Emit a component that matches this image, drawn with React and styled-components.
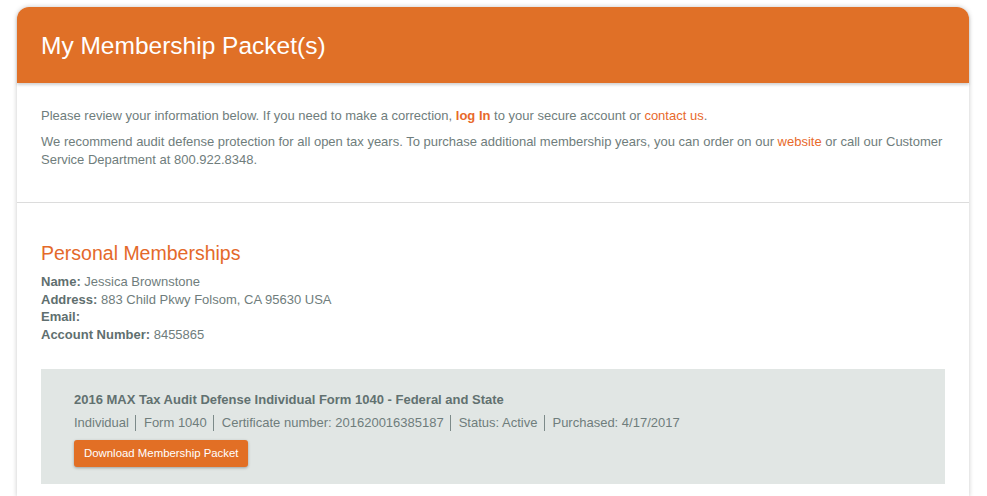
import React from "react";
import styled, { createGlobalStyle } from "styled-components";

const Global = createGlobalStyle`
  html, body { margin: 0; padding: 0; background: #ffffff; }
  body { font-family: "Liberation Sans", Arial, sans-serif; color: #6f7d7c; }
  * { box-sizing: border-box; }
`;

const Page = styled.div`
  padding: 7px 18px 0 17px;
`;

const Card = styled.div`
  background: #fff;
  border-radius: 12px 12px 0 0;
  box-shadow: 0 0 5px rgba(0, 0, 0, 0.22);
`;

const Header = styled.header`
  height: 76px;
  background: #e07027;
  border-radius: 12px 12px 0 0;
  display: flex;
  align-items: center;
  padding: 0 24px;
  box-shadow: 0 2px 3px rgba(0, 0, 0, 0.18);
  position: relative;
`;

const Title = styled.h1`
  margin: 0;
  font-size: 24.5px;
  font-weight: 400;
  color: #fff;
  padding-top: 2px;
`;

const Section = styled.section`
  padding: ${(p) => p.$pad};
  border-bottom: ${(p) => (p.$divider ? "1px solid #dcdcdc" : "none")};
`;

const Para = styled.p`
  margin: 0 0 8px;
  font-size: 13px;
  line-height: 18px;
`;

const Link = styled.a`
  color: #e8692b;
  text-decoration: none;
  font-weight: ${(p) => (p.$bold ? 700 : 400)};
`;

const Heading = styled.h2`
  margin: 0 0 8px;
  font-size: 19.5px;
  line-height: 24px;
  font-weight: 400;
  color: #e4692a;
`;

const InfoList = styled.div`
  display: flex;
  flex-direction: column;
  font-size: 13px;
  line-height: 17.7px;
`;

const Label = styled.b`
  color: #5f6f6f;
  font-weight: 700;
`;

const Packet = styled.div`
  margin-top: 25px;
  background: #e1e6e4;
  padding: 22px 33px 17px;
`;

const PacketTitle = styled.div`
  font-size: 13px;
  font-weight: 700;
  line-height: 18px;
  color: #617170;
`;

const Meta = styled.div`
  display: flex;
  font-size: 13px;
  line-height: 18px;
  margin-top: 5px;
`;

const MetaItem = styled.span`
  padding-right: 6.5px;
  padding-left: ${(p) => (p.$first ? "0" : "7.5px")};
  border-left: ${(p) => (p.$first ? "none" : "1px solid #7c8a89")};
  line-height: 16px;
  margin-top: 1px;
`;

const Button = styled.button`
  margin-top: 9px;
  height: 27px;
  padding: 0 10px;
  background: #e26f25;
  color: #fff;
  border: none;
  border-radius: 3px;
  font-family: "Liberation Sans", Arial, sans-serif;
  font-size: 11.4px;
  box-shadow: 0 1px 3px rgba(0, 0, 0, 0.3);
  cursor: pointer;
`;

const meta = [
  "Individual",
  "Form 1040",
  "Certificate number: 201620016385187",
  "Status: Active",
  "Purchased: 4/17/2017",
];

export default function App() {
  return (
    <>
      <Global />
      <Page>
        <Card>
          <Header>
            <Title>My Membership Packet(s)</Title>
          </Header>
          <Section $pad="24px 24px 25px" $divider>
            <Para>
              Please review your information below. If you need to make a correction,{" "}
              <Link $bold>log In</Link> to your secure account or <Link>contact us</Link>.
            </Para>
            <Para>
              We recommend audit defense protection for all open tax years. To purchase
              additional membership years, you can order on our <Link>website</Link> or call
              our Customer Service Department at 800.922.8348.
            </Para>
          </Section>
          <Section $pad="38px 24px 13px">
            <Heading>Personal Memberships</Heading>
            <InfoList>
              <div>
                <Label>Name:</Label> Jessica Brownstone
              </div>
              <div>
                <Label>Address:</Label> 883 Child Pkwy Folsom, CA 95630 USA
              </div>
              <div>
                <Label>Email:</Label>
              </div>
              <div>
                <Label>Account Number:</Label> 8455865
              </div>
            </InfoList>
            <Packet>
              <PacketTitle>
                2016 MAX Tax Audit Defense Individual Form 1040 - Federal and State
              </PacketTitle>
              <Meta>
                {meta.map((m, i) => (
                  <MetaItem key={m} $first={i === 0}>
                    {m}
                  </MetaItem>
                ))}
              </Meta>
              <Button>Download Membership Packet</Button>
            </Packet>
          </Section>
        </Card>
      </Page>
    </>
  );
}
